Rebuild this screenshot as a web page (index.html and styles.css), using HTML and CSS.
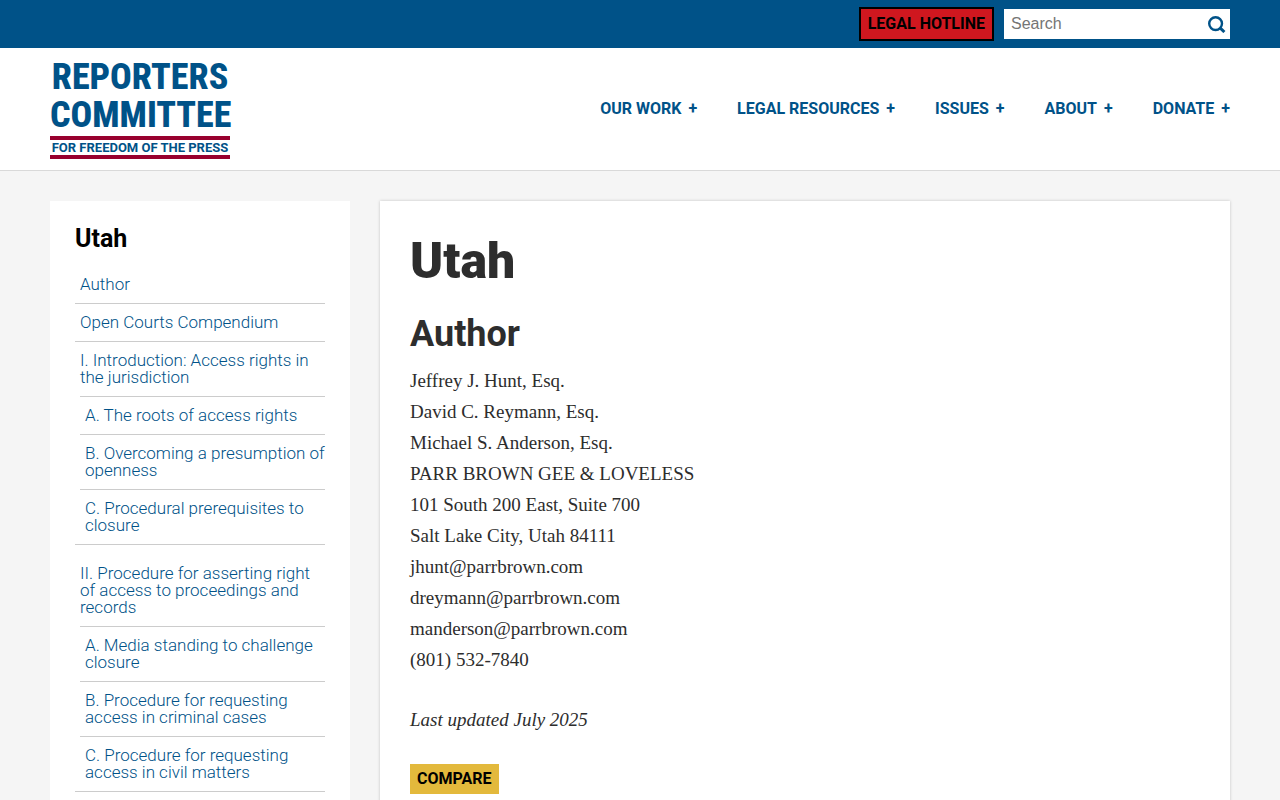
FILE: index.html
```html
<!DOCTYPE html>
<html lang="en">
<head>
  <meta charset="UTF-8" />
  <meta name="viewport" content="width=device-width, initial-scale=1" />
  <title>Utah - Reporters Committee for Freedom of the Press</title>
  <link rel="stylesheet" href="styles.css">
</head>
<body>

  <div class="topbar">
    <div class="container topbar-inner">
      <a href="#" class="hotline">Legal Hotline</a>
      <form class="search" role="search">
        <input type="text" name="s" placeholder="Search" aria-label="Search" />
        <button type="submit" aria-label="Submit search">
          <svg viewBox="0 0 18 18" width="18" height="18" fill="none" stroke="#005288">
            <circle cx="7.6" cy="8.6" r="6.4" stroke-width="2.4" />
            <path d="M12 12.8 L16.4 17" stroke-width="3" />
          </svg>
        </button>
      </form>
    </div>
  </div>

  <header class="header">
    <div class="container header-inner">
      <a href="#" class="logo">
        <span class="logo-name">REPORTERS</span>
        <span class="logo-name">COMMITTEE</span>
        <span class="logo-tagline">FOR FREEDOM OF THE PRESS</span>
      </a>
      <nav class="main-nav">
        <a href="#">Our Work</a>
        <a href="#">Legal Resources</a>
        <a href="#">Issues</a>
        <a href="#">About</a>
        <a href="#">Donate</a>
      </nav>
    </div>
  </header>

  <div class="container page">
    <aside class="sidebar">
      <h2>Utah</h2>
      <ul class="toc">
        <li><a href="#author">Author</a></li>
        <li><a href="#">Open Courts Compendium</a></li>
        <li>
          <a href="#">I. Introduction: Access rights in the jurisdiction</a>
          <ul>
            <li><a href="#">A. The roots of access rights</a></li>
            <li><a href="#">B. Overcoming a presumption of openness</a></li>
            <li><a href="#">C. Procedural prerequisites to closure</a></li>
          </ul>
        </li>
        <li>
          <a href="#">II. Procedure for asserting right of access to proceedings and records</a>
          <ul>
            <li><a href="#">A. Media standing to challenge closure</a></li>
            <li><a href="#">B. Procedure for requesting access in criminal cases</a></li>
            <li><a href="#">C. Procedure for requesting access in civil matters</a></li>
          </ul>
        </li>
      </ul>
    </aside>

    <main class="content">
      <h1>Utah</h1>
      <h2 id="author">Author</h2>
      <p>
        Jeffrey J. Hunt, Esq.<br>
        David C. Reymann, Esq.<br>
        Michael S. Anderson, Esq.<br>
        PARR BROWN GEE &amp; LOVELESS<br>
        101 South 200 East, Suite 700<br>
        Salt Lake City, Utah 84111<br>
        jhunt@parrbrown.com<br>
        dreymann@parrbrown.com<br>
        manderson@parrbrown.com<br>
        (801) 532-7840
      </p>
      <p><em>Last updated July 2025</em></p>
      <button type="button" class="compare">Compare</button>
    </main>
  </div>

</body>
</html>
```
FILE: styles.css
```css
* {
  box-sizing: border-box;
}

body {
  margin: 0;
  background: #f5f5f5;
  color: #2d2d2d;
  font-family: Roboto, sans-serif;
}

a {
  color: #005288;
  text-decoration: none;
}

.container {
  max-width: 1280px;
  margin: 0 auto;
  padding: 0 50px;
}

/* top bar */
.topbar {
  background: #005288;
}

.topbar-inner {
  display: flex;
  justify-content: flex-end;
  align-items: center;
  gap: 10px;
  min-height: 48px;
}

.hotline {
  padding: 6px 7px;
  border: 2px solid #000;
  background: #cf171f;
  color: #000;
  font-size: 16px;
  font-weight: 700;
  line-height: 18px;
  text-transform: uppercase;
}

.search {
  display: flex;
  width: 226px;
  height: 30px;
  background: #fff;
}

.search input {
  flex: 1;
  min-width: 0;
  padding: 0 7px;
  border: 0;
  background: none;
  font-family: "Liberation Sans", Arial, sans-serif;
  font-size: 16px;
}

.search input::placeholder {
  color: #757575;
}

.search button {
  display: flex;
  align-items: center;
  padding: 0 4px;
  border: 0;
  background: none;
  cursor: pointer;
}

/* header */
.header {
  background: #fff;
  border-bottom: 1px solid #d9d9d9;
}

.header-inner {
  display: flex;
  justify-content: space-between;
  align-items: center;
  padding-top: 10px;
  padding-bottom: 11px;
}

.logo {
  width: 180px;
  white-space: nowrap;
  text-align: center;
}

.logo span {
  display: block;
}

.logo-name {
  font-family: "Roboto Condensed", "Liberation Sans Narrow", sans-serif;
  font-size: 36px;
  font-weight: 800;
  line-height: 38px;
}

.logo-tagline {
  margin-top: 2px;
  border-top: 4px solid #98002e;
  border-bottom: 4px solid #98002e;
  font-size: 13px;
  font-weight: 700;
  line-height: 15px;
}

.main-nav {
  display: flex;
  gap: 40px;
}

.main-nav a {
  font-size: 16px;
  font-weight: 700;
  line-height: 20px;
  text-transform: uppercase;
}

.main-nav a::after {
  content: "+";
  margin-left: 7px;
}

/* page */
.page {
  display: grid;
  grid-template-columns: 300px 1fr;
  gap: 30px;
  align-items: start;
  padding-top: 30px;
  padding-bottom: 30px;
}

.sidebar {
  padding: 25px;
  background: #fff;
}

.sidebar h2 {
  margin: 0 0 14px;
  color: #000;
  font-size: 25px;
  font-weight: 700;
  line-height: 26px;
}

.sidebar ul {
  margin: 0;
  padding: 0;
  list-style: none;
}

.sidebar li {
  border-bottom: 1px solid #ccc;
}

.sidebar li a {
  display: block;
  padding: 10px 0 10px 5px;
  font-size: 17px;
  font-weight: 300;
  line-height: 17px;
}

.toc li ul {
  margin-left: 5px;
  border-top: 1px solid #ccc;
}

.toc li li:last-child {
  border-bottom: 0;
}

.toc > li:has(ul) + li {
  padding-top: 10px;
}

.content {
  padding: 30px;
  background: #fff;
  box-shadow: 0 0 3px rgba(0, 0, 0, 0.2);
}

.content h1 {
  margin: 0 0 20px;
  font-size: 50px;
  font-weight: 900;
  line-height: 60px;
}

.content h2 {
  margin: 0 0 8px;
  font-size: 36px;
  font-weight: 700;
  line-height: 46px;
}

.content p {
  margin: 0 0 29px;
  font-family: Georgia, "Liberation Serif", serif;
  font-size: 19px;
  line-height: 31px;
}

.compare {
  padding: 6px 7px;
  border: 0;
  background: #e3b93c;
  color: #000;
  font-family: Roboto, sans-serif;
  font-size: 16px;
  font-weight: 700;
  line-height: 18px;
  text-transform: uppercase;
  cursor: pointer;
}
```
